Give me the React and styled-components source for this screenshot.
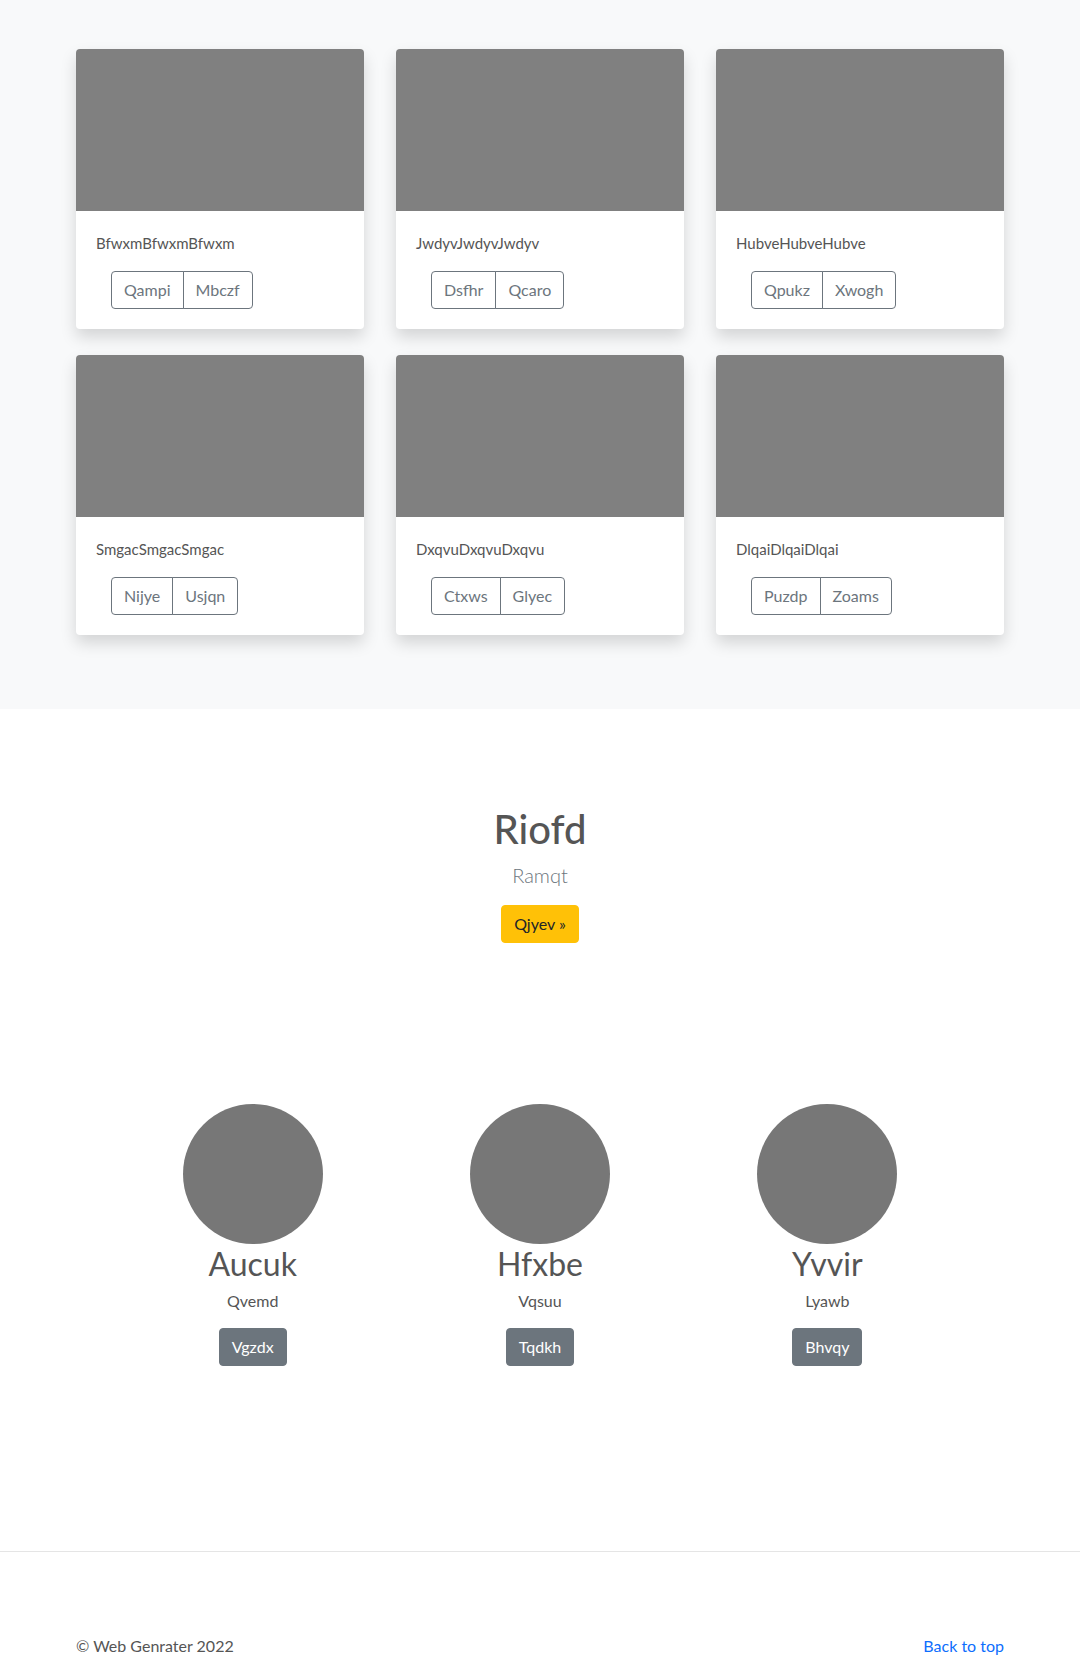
import React from 'react'
import styled, { createGlobalStyle } from 'styled-components'

const GlobalStyle = createGlobalStyle`
  * { box-sizing: border-box; }
  body {
    margin: 0;
    font-family: Lato, "Open Sans", sans-serif;
    font-size: 16px;
    line-height: 1.5;
    color: #555;
    background: #fff;
  }
`

const Album = styled.section`
  background-color: #f8f9fa;
  padding: 49px 0 74px;
`

const CardGrid = styled.div`
  width: 928px;
  margin: 0 auto;
  display: grid;
  grid-template-columns: repeat(3, 1fr);
  column-gap: 32px;
  row-gap: 26px;
`

const Card = styled.div`
  background-color: #fff;
  border-radius: 4px;
  overflow: hidden;
  box-shadow: 0 8px 16px rgba(0, 0, 0, 0.15);
`

const Thumb = styled.div`
  height: 162px;
  background-color: #808080;
`

const CardBody = styled.div`
  padding: 20px;
`

const CardText = styled.p`
  margin: 0 0 16px;
  font-size: 15px;
  line-height: 24px;
  color: #555;
`

const BtnGroup = styled.div`
  display: inline-flex;
  margin-left: 15px;
`

const OutlineBtn = styled.button`
  font-family: inherit;
  font-size: 16px;
  line-height: 24px;
  padding: 6px 12px;
  background: transparent;
  color: #6c757d;
  border: 1px solid #6c757d;
  border-radius: ${p => (p.$first ? '4px 0 0 4px' : '0 4px 4px 0')};
  margin-left: ${p => (p.$first ? '0' : '-1px')};
  cursor: pointer;
`

const Hero = styled.section`
  text-align: center;
  padding: 96px 0 0;
`

const HeroTitle = styled.h1`
  margin: 0 0 7px;
  font-size: 40px;
  line-height: 48px;
  font-weight: 500;
  color: #555;
`

const Lead = styled.p`
  margin: 0 0 15px;
  font-size: 20px;
  line-height: 30px;
  font-weight: 300;
  color: #6c757d;
`

const Button = styled.button`
  font-family: inherit;
  font-size: 16px;
  line-height: 24px;
  padding: 6px 12px;
  border-radius: 4px;
  border: 1px solid ${p => p.$bg};
  background-color: ${p => p.$bg};
  color: ${p => p.$color};
  cursor: pointer;
`

const Team = styled.section`
  width: 862px;
  margin: 161px auto 0;
  display: grid;
  grid-template-columns: repeat(3, 1fr);
  padding-bottom: 185px;
`

const Member = styled.div`
  display: flex;
  flex-direction: column;
  align-items: center;
  text-align: center;
`

const Avatar = styled.div`
  width: 140px;
  height: 140px;
  border-radius: 50%;
  background-color: #777;
  margin-bottom: 1px;
`

const Name = styled.h2`
  margin: 0 0 6px;
  font-size: 32px;
  line-height: 38px;
  font-weight: 400;
  color: #555;
`

const Role = styled.p`
  margin: 0 0 15px;
  font-size: 16px;
  line-height: 24px;
  color: #555;
`

const Footer = styled.footer`
  border-top: 1px solid #e5e5e5;
  padding: 82px 0 0;
`

const FooterInner = styled.div`
  width: 928px;
  margin: 0 auto;
  display: flex;
  justify-content: space-between;
  font-size: 16px;
  line-height: 24px;
`

const BackLink = styled.a`
  color: #0d6efd;
  text-decoration: none;
`

const cards = [
  { title: 'BfwxmBfwxmBfwxm', a: 'Qampi', b: 'Mbczf' },
  { title: 'JwdyvJwdyvJwdyv', a: 'Dsfhr', b: 'Qcaro' },
  { title: 'HubveHubveHubve', a: 'Qpukz', b: 'Xwogh' },
  { title: 'SmgacSmgacSmgac', a: 'Nijye', b: 'Usjqn' },
  { title: 'DxqvuDxqvuDxqvu', a: 'Ctxws', b: 'Glyec' },
  { title: 'DlqaiDlqaiDlqai', a: 'Puzdp', b: 'Zoams' },
]

const members = [
  { name: 'Aucuk', role: 'Qvemd', action: 'Vgzdx' },
  { name: 'Hfxbe', role: 'Vqsuu', action: 'Tqdkh' },
  { name: 'Yvvir', role: 'Lyawb', action: 'Bhvqy' },
]

const App = () => {
  return (
    <>
      <GlobalStyle />
      <Album>
        <CardGrid>
          {cards.map(card => (
            <Card key={card.title}>
              <Thumb />
              <CardBody>
                <CardText>{card.title}</CardText>
                <BtnGroup>
                  <OutlineBtn $first>{card.a}</OutlineBtn>
                  <OutlineBtn>{card.b}</OutlineBtn>
                </BtnGroup>
              </CardBody>
            </Card>
          ))}
        </CardGrid>
      </Album>

      <Hero>
        <HeroTitle>Riofd</HeroTitle>
        <Lead>Ramqt</Lead>
        <Button $bg="#ffc107" $color="#212529">Qjyev »</Button>
      </Hero>

      <Team>
        {members.map(m => (
          <Member key={m.name}>
            <Avatar />
            <Name>{m.name}</Name>
            <Role>{m.role}</Role>
            <Button $bg="#6c757d" $color="#fff">{m.action}</Button>
          </Member>
        ))}
      </Team>

      <Footer>
        <FooterInner>
          <span>© Web Genrater 2022</span>
          <BackLink href="#">Back to top</BackLink>
        </FooterInner>
      </Footer>
    </>
  )
}

export default App
